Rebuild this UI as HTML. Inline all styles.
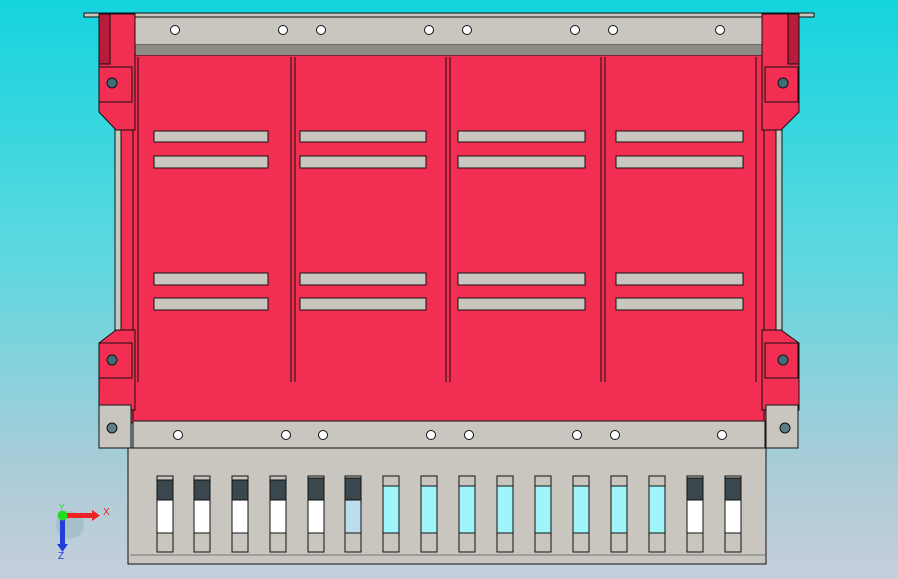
<!DOCTYPE html>
<html><head><style>
html,body{margin:0;padding:0;width:898px;height:579px;overflow:hidden}
body{background:linear-gradient(180deg,#14d4de 0%,#5fd8e0 45%,#a8ccd8 80%,#c6cfdb 100%)}
svg{position:absolute;left:0;top:0}
</style></head><body>
<svg width="898" height="579" viewBox="0 0 898 579" font-family="Liberation Sans, sans-serif">
<g stroke="#111" stroke-width="1">
<rect x="84" y="13" width="730" height="4" fill="#c8c6be"/>
<!-- side gray strips -->
<rect x="115" y="128" width="6" height="215" fill="#c8c6be"/>
<rect x="776" y="128" width="6" height="215" fill="#c8c6be"/>
<!-- main red panel -->
<rect x="121" y="55" width="655" height="368" fill="#f32e53"/>
<line x1="133" y1="57" x2="133" y2="420"/>
<line x1="764" y1="57" x2="764" y2="420"/>
<line x1="138" y1="57" x2="138" y2="382"/>
<line x1="291" y1="57" x2="291" y2="382"/><line x1="295" y1="57" x2="295" y2="382"/>
<line x1="446" y1="57" x2="446" y2="382"/><line x1="450" y1="57" x2="450" y2="382"/>
<line x1="601" y1="57" x2="601" y2="382"/><line x1="605" y1="57" x2="605" y2="382"/>
<line x1="756" y1="57" x2="756" y2="382"/>
<rect x="135" y="17" width="627" height="28" fill="#c8c6be"/>
<rect x="135" y="45" width="627" height="10" fill="#8d8c87" stroke="none"/>
<!-- left bracket -->
<path d="M99 14 H135 V130 H116 L99 112 Z" fill="#f32e53"/>
<path d="M99 410 H135 V330 H116 L99 343 Z" fill="#f32e53"/>
<rect x="99" y="14" width="11" height="50" fill="#b81c3a"/>
<rect x="99" y="67" width="33" height="35" fill="#f32e53"/>
<circle cx="112" cy="83" r="5" fill="#3e6e78"/>
<rect x="99" y="343" width="33" height="35" fill="#f32e53"/>
<circle cx="112" cy="360" r="5" fill="#3e6e78"/>
<!-- right bracket -->
<path d="M799 14 H762 V130 H781 L799 112 Z" fill="#f32e53"/>
<path d="M799 410 H762 V330 H781 L799 343 Z" fill="#f32e53"/>
<rect x="788" y="14" width="11" height="50" fill="#b81c3a"/>
<rect x="765" y="67" width="33" height="35" fill="#f32e53"/>
<circle cx="783" cy="83" r="5" fill="#3e6e78"/>
<rect x="765" y="343" width="33" height="35" fill="#f32e53"/>
<circle cx="783" cy="360" r="5" fill="#3e6e78"/>
<g fill="#c8c6be">
<rect x="154" y="131" width="114" height="11"/><rect x="154" y="156" width="114" height="12"/>
<rect x="154" y="273" width="114" height="12"/><rect x="154" y="298" width="114" height="12"/>
<rect x="300" y="131" width="126" height="11"/><rect x="300" y="156" width="126" height="12"/>
<rect x="300" y="273" width="126" height="12"/><rect x="300" y="298" width="126" height="12"/>
<rect x="458" y="131" width="127" height="11"/><rect x="458" y="156" width="127" height="12"/>
<rect x="458" y="273" width="127" height="12"/><rect x="458" y="298" width="127" height="12"/>
<rect x="616" y="131" width="127" height="11"/><rect x="616" y="156" width="127" height="12"/>
<rect x="616" y="273" width="127" height="12"/><rect x="616" y="298" width="127" height="12"/>
</g>
<rect x="99" y="405" width="32" height="43" fill="#c8c6be"/>
<circle cx="112" cy="428" r="5" fill="#5a7d85"/>
<rect x="766" y="405" width="32" height="43" fill="#c8c6be"/>
<circle cx="785" cy="428" r="5" fill="#5a7d85"/>
<rect x="128" y="448" width="638" height="116" fill="#c8c6be"/>
<rect x="133" y="421" width="632" height="27" fill="#c8c6be"/>
<line x1="130" y1="555" x2="766" y2="555" stroke="#777"/>
<g fill="#fff">
<circle cx="175" cy="30" r="4.5"/><circle cx="283" cy="30" r="4.5"/><circle cx="321" cy="30" r="4.5"/><circle cx="429" cy="30" r="4.5"/>
<circle cx="467" cy="30" r="4.5"/><circle cx="575" cy="30" r="4.5"/><circle cx="613" cy="30" r="4.5"/><circle cx="720" cy="30" r="4.5"/>
<circle cx="178" cy="435" r="4.5"/><circle cx="286" cy="435" r="4.5"/><circle cx="323" cy="435" r="4.5"/><circle cx="431" cy="435" r="4.5"/>
<circle cx="469" cy="435" r="4.5"/><circle cx="577" cy="435" r="4.5"/><circle cx="615" cy="435" r="4.5"/><circle cx="722" cy="435" r="4.5"/>
</g>
<g>
<g transform="translate(157,0)"><rect y="476" width="16" height="76" fill="#c8c6be"/><rect y="480" width="16" height="20" fill="#3a474c"/><rect y="500" width="16" height="33" fill="#fff"/></g>
<g transform="translate(194,0)"><rect y="476" width="16" height="76" fill="#c8c6be"/><rect y="480" width="16" height="20" fill="#3a474c"/><rect y="500" width="16" height="33" fill="#fff"/></g>
<g transform="translate(232,0)"><rect y="476" width="16" height="76" fill="#c8c6be"/><rect y="480" width="16" height="20" fill="#3a474c"/><rect y="500" width="16" height="33" fill="#fff"/></g>
<g transform="translate(270,0)"><rect y="476" width="16" height="76" fill="#c8c6be"/><rect y="480" width="16" height="20" fill="#3a474c"/><rect y="500" width="16" height="33" fill="#fff"/></g>
<g transform="translate(308,0)"><rect y="476" width="16" height="76" fill="#c8c6be"/><rect y="478" width="16" height="22" fill="#3a474c"/><rect y="500" width="16" height="33" fill="#fff"/></g>
<g transform="translate(345,0)"><rect y="476" width="16" height="76" fill="#c8c6be"/><rect y="478" width="16" height="22" fill="#3a474c"/><rect y="500" width="16" height="33" fill="#bde"/></g>
<g transform="translate(383,0)"><rect y="476" width="16" height="76" fill="#c8c6be"/><rect y="486" width="16" height="47" fill="#9ff5fa"/></g>
<g transform="translate(421,0)"><rect y="476" width="16" height="76" fill="#c8c6be"/><rect y="486" width="16" height="47" fill="#9ff5fa"/></g>
<g transform="translate(459,0)"><rect y="476" width="16" height="76" fill="#c8c6be"/><rect y="486" width="16" height="47" fill="#9ff5fa"/></g>
<g transform="translate(497,0)"><rect y="476" width="16" height="76" fill="#c8c6be"/><rect y="486" width="16" height="47" fill="#9ff5fa"/></g>
<g transform="translate(535,0)"><rect y="476" width="16" height="76" fill="#c8c6be"/><rect y="486" width="16" height="47" fill="#9ff5fa"/></g>
<g transform="translate(573,0)"><rect y="476" width="16" height="76" fill="#c8c6be"/><rect y="486" width="16" height="47" fill="#9ff5fa"/></g>
<g transform="translate(611,0)"><rect y="476" width="16" height="76" fill="#c8c6be"/><rect y="486" width="16" height="47" fill="#9ff5fa"/></g>
<g transform="translate(649,0)"><rect y="476" width="16" height="76" fill="#c8c6be"/><rect y="486" width="16" height="47" fill="#9ff5fa"/></g>
<g transform="translate(687,0)"><rect y="476" width="16" height="76" fill="#c8c6be"/><rect y="478" width="16" height="22" fill="#3a474c"/><rect y="500" width="16" height="33" fill="#fff"/></g>
<g transform="translate(725,0)"><rect y="476" width="16" height="76" fill="#c8c6be"/><rect y="478" width="16" height="22" fill="#3a474c"/><rect y="500" width="16" height="33" fill="#fff"/></g>
</g>
</g>
<circle cx="70" cy="525" r="14" fill="#8aa" opacity="0.35"/>
<rect x="66" y="513" width="27" height="5" fill="#e22"/>
<polygon points="92,510 100,515.5 92,521" fill="#e22"/>
<rect x="60" y="518" width="5" height="27" fill="#2240d8"/>
<polygon points="57,544 62.5,552 68,544" fill="#2240d8"/>
<circle cx="62.5" cy="515.5" r="5" fill="#2d2"/>
<text x="103" y="515" font-size="10" fill="#e22">X</text>
<text x="58" y="559" font-size="10" fill="#2240d8">Z</text>
<text x="59" y="510" font-size="8" fill="#2d2">Y</text>
</svg>
</body></html>
